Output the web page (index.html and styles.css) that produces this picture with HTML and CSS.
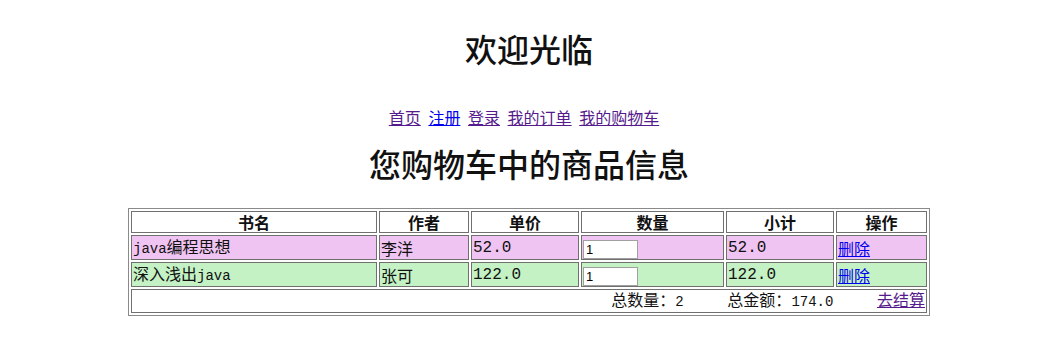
FILE: index.html
```html
<!DOCTYPE html>
<html lang="zh-CN">
<head>
  <meta charset="UTF-8" />
  <title>我的购物车</title>
  <link rel="stylesheet" href="styles.css">
</head>
<body>

  <!-- 标题 -->
  <h1 class="welcome">欢迎光临</h1>

  <!-- 导航 -->
  <div class="nav">
    <a href="#" class="visited">首页</a>
    <a href="#">注册</a>
    <a href="#" class="visited">登录</a>
    <a href="#" class="visited">我的订单</a>
    <a href="#" class="visited">我的购物车</a>
  </div>

  <h1 class="page-title">您购物车中的商品信息</h1>

  <!-- 购物车 -->
  <table class="cart">
    <tr>
      <th class="c-name">书名</th>
      <th class="c-author">作者</th>
      <th class="c-price">单价</th>
      <th class="c-qty">数量</th>
      <th class="c-sub">小计</th>
      <th class="c-op">操作</th>
    </tr>
    <tr class="odd">
      <td><span class="num">java</span>编程思想</td>
      <td>李洋</td>
      <td class="num">52.0</td>
      <td><input type="text" value="1"></td>
      <td class="num">52.0</td>
      <td><a href="#">删除</a></td>
    </tr>
    <tr class="even">
      <td>深入浅出<span class="num">java</span></td>
      <td>张可</td>
      <td class="num">122.0</td>
      <td><input type="text" value="1"></td>
      <td class="num">122.0</td>
      <td><a href="#">删除</a></td>
    </tr>
    <tr class="total">
      <td colspan="6">
        <span>总数量：<span class="num">2</span></span>
        <span class="gap">总金额：<span class="num">174.0</span></span>
        <a href="#" class="visited gap">去结算</a>
      </td>
    </tr>
  </table>

</body>
</html>
```

FILE: styles.css
```css
body {
  margin: 8px 8px 8px 28px;
  font-family: "Noto Sans CJK SC", sans-serif;
  font-size: 16px;
  color: #111;
  background: #fff;
  text-align: center;
}

a { color: #0000ee; }
a.visited { color: #551a8b; }

h1 {
  font-size: 32px;
  font-weight: 500;
  line-height: 38px;
  margin: 0;
}
.welcome { margin-top: 21px; }

.nav {
  margin-top: 40px;
  margin-right: 10px;
  line-height: 20px;
}
.nav a { margin: 0 2px; }

.page-title { margin-top: 17px; margin-bottom: 26px; }

/* TABLE */
.cart {
  width: 802px;
  margin: 0 auto;
  border: 1px solid #8a8a8a;
  border-spacing: 2px;
  table-layout: fixed;
  text-align: left;
}
.cart th,
.cart td {
  border: 1px solid #707070;
  padding: 0 1px;
  font-size: 16px;
  white-space: nowrap;
}
.cart th {
  text-align: center;
  font-weight: 700;
  height: 20px;
  line-height: 19px;
}
.cart td { height: 22px; line-height: 20px; }

.c-name { width: 242px; }
.c-author { width: 86px; }
.c-price { width: 104px; }
.c-qty { width: 139px; }
.c-sub { width: 104px; }

.num {
  font-family: "Liberation Mono", monospace;
  font-size: 14px;
}

.odd td { background: #f0c4f2; }
.even td { background: #c4f2c4; }

.cart input {
  width: 49px;
  height: 17px;
  margin: 0;
  padding: 0 2px;
  border: 1px solid #a0a0a0;
  font-family: "Liberation Sans", sans-serif;
  font-size: 13px;
  vertical-align: middle;
}

.total td {
  text-align: right;
  height: 20px;
  line-height: 19px;
  background: #fff;
}
.total .gap { margin-left: 40px; }
```
